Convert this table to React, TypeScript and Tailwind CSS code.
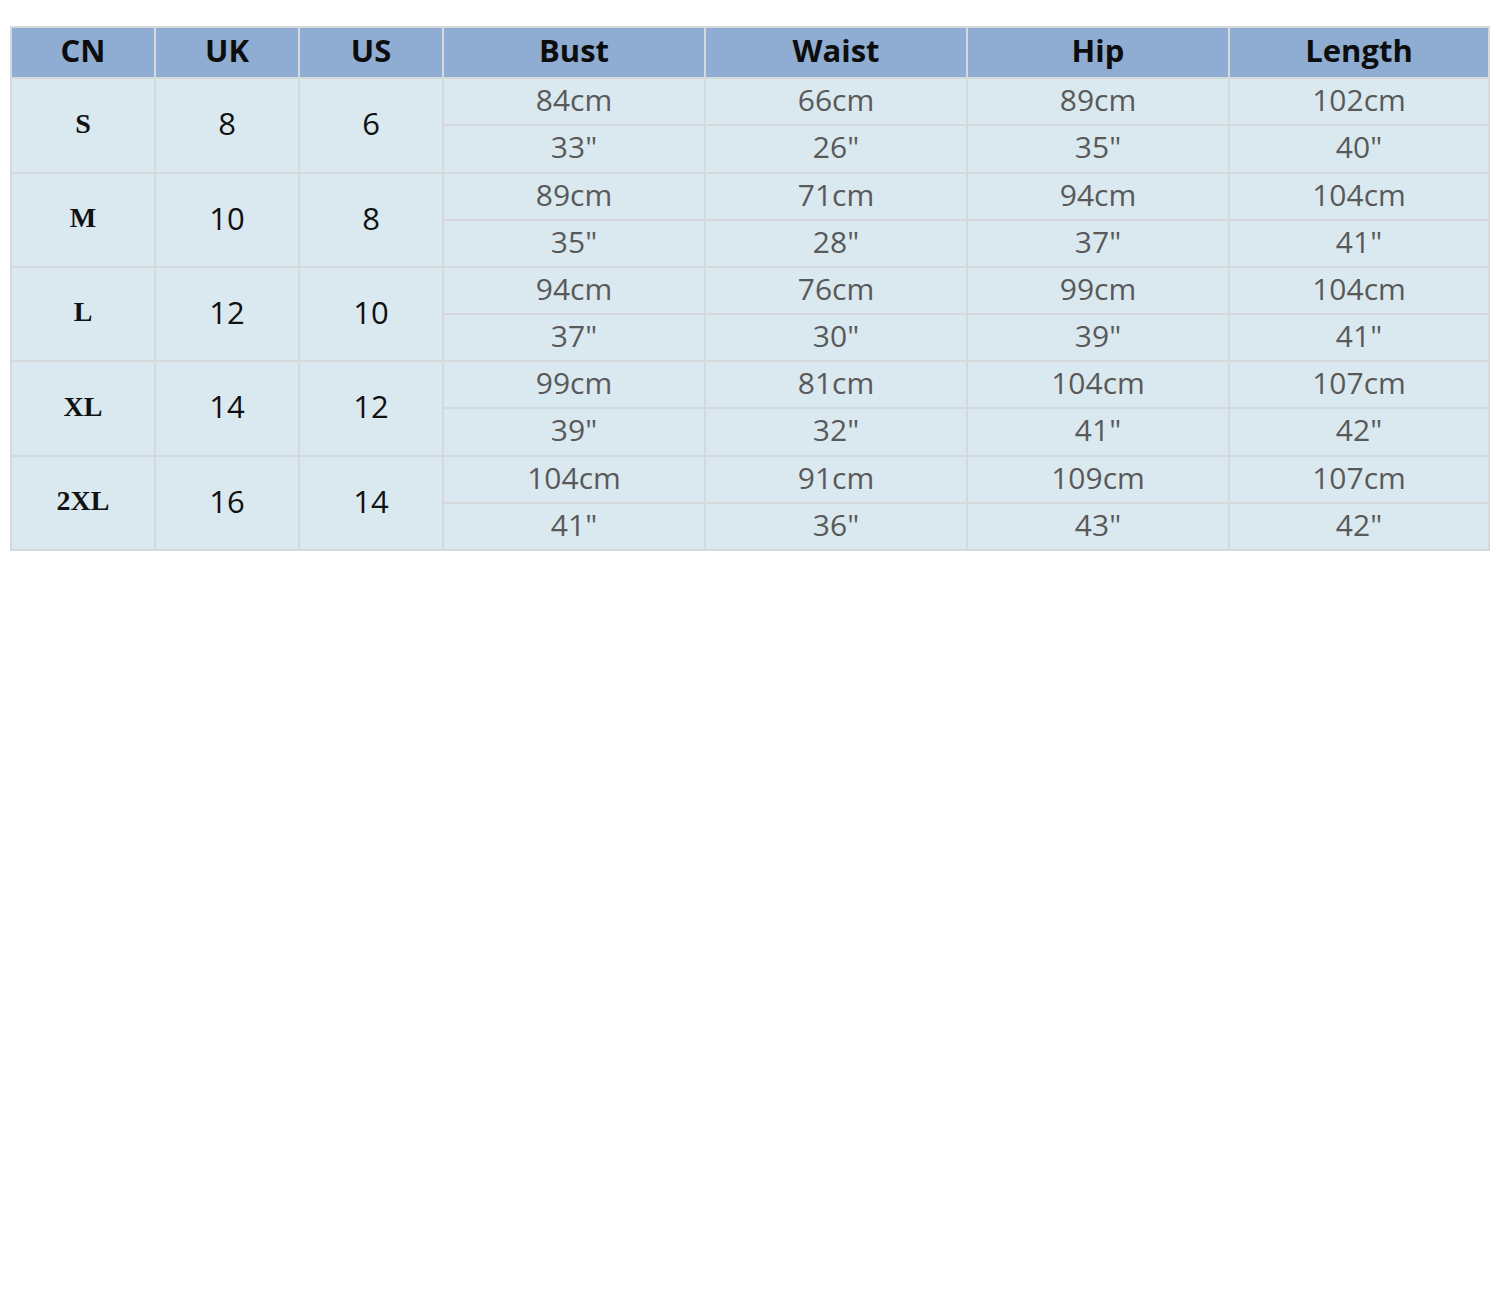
import React from "react";

const rows = [
  { cn: "S", uk: "8", us: "6", cm: ["84cm", "66cm", "89cm", "102cm"], inch: ['33"', '26"', '35"', '40"'], tall: true },
  { cn: "M", uk: "10", us: "8", cm: ["89cm", "71cm", "94cm", "104cm"], inch: ['35"', '28"', '37"', '41"'], tall: false },
  { cn: "L", uk: "12", us: "10", cm: ["94cm", "76cm", "99cm", "104cm"], inch: ['37"', '30"', '39"', '41"'], tall: false },
  { cn: "XL", uk: "14", us: "12", cm: ["99cm", "81cm", "104cm", "107cm"], inch: ['39"', '32"', '41"', '42"'], tall: true },
  { cn: "2XL", uk: "16", us: "14", cm: ["104cm", "91cm", "109cm", "107cm"], inch: ['41"', '36"', '43"', '42"'], tall: false },
];

const heads = ["CN", "UK", "US", "Bust", "Waist", "Hip", "Length"];

export default function App() {
  return (
    <div className="w-[1500px] h-[1300px] bg-white pt-[26px] pl-[10px]" style={{ fontFamily: '"Open Sans", sans-serif' }}>
      <table className="table-fixed border-collapse w-[1478px] text-center">
        <colgroup>
          <col className="w-[144px]" />
          <col className="w-[144px]" />
          <col className="w-[144px]" />
          <col className="w-[262px]" />
          <col className="w-[262px]" />
          <col className="w-[262px]" />
          <col className="w-[260px]" />
        </colgroup>
        <thead>
          <tr className="h-[51px] bg-[#8fadd2]">
            {heads.map((h) => (
              <th key={h} className="border-2 border-[#d6d9dc] text-[31px] font-bold text-[#0d0d0d] leading-none p-0 pb-[4px]">
                {h}
              </th>
            ))}
          </tr>
        </thead>
        <tbody className="bg-[#d9e9ef]">
          {rows.map((r) => (
            <React.Fragment key={r.cn}>
              <tr className="h-[47px]">
                <td rowSpan={2} className="border-2 border-[#d6d9dc] p-0 pb-[4px] text-[28px] font-bold text-[#111]" style={{ fontFamily: '"Liberation Serif", serif' }}>
                  {r.cn}
                </td>
                <td rowSpan={2} className="border-2 border-[#d6d9dc] p-0 pb-[4px] text-[31px] text-[#111]">{r.uk}</td>
                <td rowSpan={2} className="border-2 border-[#d6d9dc] p-0 pb-[4px] text-[31px] text-[#111]">{r.us}</td>
                {r.cm.map((v, i) => (
                  <td key={i} className="border-2 border-[#d6d9dc] p-0 pb-[4px] text-[30px] text-[#595959] leading-none">{v}</td>
                ))}
              </tr>
              <tr className={r.tall ? "h-[48px]" : "h-[47px]"}>
                {r.inch.map((v, i) => (
                  <td key={i} className="border-2 border-[#d6d9dc] p-0 pb-[4px] text-[30px] text-[#595959] leading-none">{v}</td>
                ))}
              </tr>
            </React.Fragment>
          ))}
        </tbody>
      </table>
    </div>
  );
}
